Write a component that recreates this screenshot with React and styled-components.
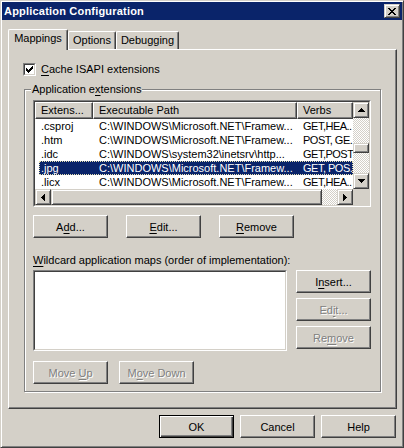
import React from 'react';
import styled, { createGlobalStyle, css } from 'styled-components';

const FACE = '#d4d0c8';
const DARK = '#404040';
const SHADOW = '#808080';
const NAVY = '#0a246a';

const Global = createGlobalStyle`
  html, body { margin: 0; padding: 0; background: ${FACE}; }
  body {
    font-family: "Liberation Sans", Arial, sans-serif;
    font-size: 11px;
    color: #000;
  }
  * { box-sizing: border-box; }
  u { text-decoration-thickness: 1px; text-underline-offset: 2px; }
`;

const Window = styled.div`
  width: 404px;
  height: 448px;
  background: ${FACE};
  border: 1px solid;
  border-color: ${FACE} ${DARK} ${DARK} ${FACE};
  box-shadow: inset 1px 1px #fff, inset -1px -1px ${SHADOW};
  padding: 1px;
  display: flex;
  flex-direction: column;
`;

const TitleBar = styled.div`
  height: 18px;
  background: ${NAVY};
  color: #fff;
  font-weight: bold;
  display: flex;
  align-items: center;
  justify-content: space-between;
  padding: 0 2px 0 2px;
`;

const TitleText = styled.span`
  line-height: 13px;
  letter-spacing: 0.2px;
`;

const raised = css`
  border: 1px solid;
  border-color: ${FACE} ${DARK} ${DARK} ${FACE};
  box-shadow: inset 1px 1px #fff, inset -1px -1px ${SHADOW};
  background: ${FACE};
`;

const CloseButton = styled.div`
  ${raised};
  width: 16px;
  height: 14px;
  display: flex;
  align-items: center;
  justify-content: center;
`;

const Body = styled.div`
  flex: 1;
  display: flex;
  flex-direction: column;
  padding: 9px 5px 0 6px;
`;

const TabStrip = styled.div`
  height: 20px;
  display: flex;
  align-items: flex-end;
`;

const Tab = styled.div`
  position: relative;
  width: ${p => p.$w}px;
  height: ${p => (p.$active ? 21 : 18)}px;
  margin-bottom: ${p => (p.$active ? -1 : 0)}px;
  z-index: ${p => (p.$active ? 2 : 0)};
  background: ${FACE};
  border-top: 1px solid #fff;
  border-left: 1px solid #fff;
  border-right: 1px solid ${DARK};
  border-radius: 2px 2px 0 0;
  box-shadow: inset -1px 0 ${SHADOW};
  text-align: center;
  line-height: 13px;
  padding-top: 2px;
`;

const TabPage = styled.div`
  width: 389px;
  height: 360px;
  border: 1px solid;
  border-color: #fff ${DARK} ${DARK} #fff;
  box-shadow: inset -1px -1px ${SHADOW};
  display: flex;
  flex-direction: column;
  padding: 13px 0 0 14px;
`;

const CheckRow = styled.label`
  display: flex;
  align-items: center;
  gap: 5px;
  height: 13px;
  line-height: 13px;
`;

const CheckOuter = styled.span`
  width: 13px;
  height: 13px;
  border: 1px solid;
  border-color: ${SHADOW} #fff #fff ${SHADOW};
  display: flex;
`;

const CheckInner = styled.span`
  flex: 1;
  border: 1px solid;
  border-color: ${DARK} ${FACE} ${FACE} ${DARK};
  background: #fff;
  padding: 1px;
  display: flex;
`;

const GroupBox = styled.div`
  position: relative;
  margin: 13px 0 0 1px;
  width: 357px;
  height: 303px;
  border: 1px solid ${SHADOW};
  box-shadow: 1px 1px 0 #fff, inset 1px 1px 0 #fff;
  padding: 10px 0 0 8px;
  display: flex;
  flex-direction: column;
`;

const Legend = styled.span`
  position: absolute;
  top: -7px;
  left: 6px;
  padding: 0 1px;
  background: ${FACE};
  line-height: 13px;
`;

const SunkenOuter = styled.div`
  width: ${p => p.$w}px;
  height: ${p => p.$h}px;
  border: 1px solid;
  border-color: ${SHADOW} #fff #fff ${SHADOW};
  display: flex;
`;

const SunkenInner = styled.div`
  flex: 1;
  border: 1px solid;
  border-color: ${DARK} ${FACE} ${FACE} ${DARK};
  background: #fff;
  min-width: 0;
`;

const ListGrid = styled(SunkenInner)`
  display: grid;
  grid-template-columns: 318px 16px;
  grid-template-rows: 87px 16px;
  overflow: hidden;
`;

const Columns = css`
  display: grid;
  grid-template-columns: 58px 204px 56px;
`;

const ItemsArea = styled.div`
  display: flex;
  flex-direction: column;
  overflow: hidden;
`;

const HeaderRow = styled.div`
  ${Columns};
  height: 17px;
`;

const HeaderCell = styled.div`
  ${raised};
  border-color: #fff ${DARK} ${DARK} #fff;
  box-shadow: inset -1px -1px ${SHADOW};
  padding-left: 5px;
  line-height: 15px;
  white-space: nowrap;
  overflow: hidden;
`;

const Row = styled.div`
  ${Columns};
  position: relative;
  height: 14px;
  line-height: 14px;
  color: ${p => (p.$selected ? '#fff' : '#000')};
  background: ${p => (p.$selected ? `linear-gradient(to right, transparent 4px, ${NAVY} 4px)` : 'transparent')};
  ${p => p.$selected && css`
    &::after {
      content: '';
      position: absolute;
      top: 0; bottom: 0; left: 4px; right: 0;
      border: 1px dotted #e6dfb0;
    }
  `}
`;

const Cell = styled.div`
  padding-left: 6px;
  white-space: nowrap;
  overflow: hidden;
  letter-spacing: ${p => (p.$tight ? '-0.5px' : 'normal')};
`;

const checker = css`
  background-color: #fff;
  background-image: conic-gradient(${FACE} 25%, #fff 0 50%, ${FACE} 0 75%, #fff 0);
  background-size: 2px 2px;
`;

const VScroll = styled.div`
  display: flex;
  flex-direction: column;
`;

const HScroll = styled.div`
  display: flex;
`;

const ScrollButton = styled.div`
  ${raised};
  width: 16px;
  height: 16px;
  flex: none;
  display: flex;
  align-items: center;
  justify-content: center;
`;

const Track = styled.div`
  ${checker};
  flex: 1;
  display: flex;
  flex-direction: ${p => (p.$vertical ? 'column' : 'row')};
  padding-top: ${p => p.$offset || 0}px;
`;

const Thumb = styled.div`
  ${raised};
  flex: none;
  width: ${p => p.$w}px;
  height: ${p => p.$h}px;
`;

const Corner = styled.div`
  background: ${FACE};
`;

const ButtonRow = styled.div`
  display: flex;
  gap: ${p => p.$gap}px;
  margin-top: ${p => p.$top || 0}px;
`;

const ButtonFrame = styled.div`
  width: 75px;
  height: 23px;
  flex: none;
  background: ${FACE};
  display: flex;
  align-items: center;
  justify-content: center;
  line-height: 13px;
  border: 1px solid;
  border-color: ${p => (p.$default ? '#000' : `#fff ${DARK} ${DARK} #fff`)};
  box-shadow: ${p =>
    p.$default
      ? `inset 1px 1px #fff, inset -1px -1px ${DARK}, inset -2px -2px ${SHADOW}`
      : `inset -1px -1px ${SHADOW}`};
  color: ${p => (p.$disabled ? SHADOW : '#000')};
  text-shadow: ${p => (p.$disabled ? '1px 1px 0 #fff' : 'none')};
  padding-top: 1px;
`;

const ButtonLabel = styled.span`
  white-space: pre;
`;

const Button = ({ children, ...rest }) => (
  <ButtonFrame {...rest}>
    <ButtonLabel>{children}</ButtonLabel>
  </ButtonFrame>
);

const FieldLabel = styled.div`
  margin-top: 16px;
  height: 13px;
  line-height: 13px;
`;

const WildRow = styled.div`
  display: flex;
  gap: 9px;
  margin-top: 3px;
`;

const ButtonColumn = styled.div`
  display: flex;
  flex-direction: column;
  gap: 5px;
`;

const Footer = styled.div`
  display: flex;
  justify-content: flex-end;
  gap: 6px;
  margin-top: 6px;
  padding-right: 1px;
`;

const Pixels = ({ w, h, rects, color = '#000' }) => (
  <svg width={w} height={h} viewBox={`0 0 ${w} ${h}`} shapeRendering="crispEdges">
    {rects.map(([x, y, rw, rh], i) => (
      <rect key={i} x={x} y={y} width={rw} height={rh} fill={color} />
    ))}
  </svg>
);

const CheckMark = () => (
  <Pixels
    w={7}
    h={7}
    rects={[[0, 2, 1, 3], [1, 3, 1, 3], [2, 4, 1, 3], [3, 3, 1, 3], [4, 2, 1, 3], [5, 1, 1, 3], [6, 0, 1, 3]]}
  />
);

const CloseGlyph = () => (
  <Pixels
    w={8}
    h={7}
    rects={[
      [0, 0, 2, 1], [6, 0, 2, 1],
      [1, 1, 2, 1], [5, 1, 2, 1],
      [2, 2, 4, 1],
      [3, 3, 2, 1],
      [2, 4, 4, 1],
      [1, 5, 2, 1], [5, 5, 2, 1],
      [0, 6, 2, 1], [6, 6, 2, 1],
    ]}
  />
);

const Arrow = ({ dir }) => {
  if (dir === 'up')
    return <Pixels w={7} h={4} rects={[[3, 0, 1, 1], [2, 1, 3, 1], [1, 2, 5, 1], [0, 3, 7, 1]]} />;
  if (dir === 'down')
    return <Pixels w={7} h={4} rects={[[0, 0, 7, 1], [1, 1, 5, 1], [2, 2, 3, 1], [3, 3, 1, 1]]} />;
  if (dir === 'left')
    return <Pixels w={4} h={7} rects={[[0, 3, 1, 1], [1, 2, 1, 3], [2, 1, 1, 5], [3, 0, 1, 7]]} />;
  return <Pixels w={4} h={7} rects={[[0, 0, 1, 7], [1, 1, 1, 5], [2, 2, 1, 3], [3, 3, 1, 1]]} />;
};

const rows = [
  ['.csproj', 'C:\\WINDOWS\\Microsoft.NET\\Framew...', 'GET,HEA..'],
  ['.htm', 'C:\\WINDOWS\\Microsoft.NET\\Framew...', 'POST, GE.'],
  ['.idc', 'C:\\WINDOWS\\system32\\inetsrv\\http...', 'GET,POST'],
  ['.jpg', 'C:\\WINDOWS\\Microsoft.NET\\Framew...', 'GET, POS.', true],
  ['.licx', 'C:\\WINDOWS\\Microsoft.NET\\Framew...', 'GET,HEA..'],
];

export default function App() {
  return (
    <>
      <Global />
      <Window>
        <TitleBar>
          <TitleText>Application Configuration</TitleText>
          <CloseButton>
            <CloseGlyph />
          </CloseButton>
        </TitleBar>
        <Body>
          <TabStrip>
            <Tab $w={60} $active>Mappings</Tab>
            <Tab $w={48}>Options</Tab>
            <Tab $w={63}>Debugging</Tab>
          </TabStrip>
          <TabPage>
            <CheckRow>
              <CheckOuter>
                <CheckInner>
                  <CheckMark />
                </CheckInner>
              </CheckOuter>
              <span><u>C</u>ache ISAPI extensions</span>
            </CheckRow>
            <GroupBox>
              <Legend>Application e<u>x</u>tensions</Legend>
              <SunkenOuter $w={338} $h={107}>
                <ListGrid>
                  <ItemsArea>
                    <HeaderRow>
                      <HeaderCell>Extens...</HeaderCell>
                      <HeaderCell>Executable Path</HeaderCell>
                      <HeaderCell>Verbs</HeaderCell>
                    </HeaderRow>
                    {rows.map(([ext, path, verbs, sel]) => (
                      <Row key={ext} $selected={sel}>
                        <Cell>{ext}</Cell>
                        <Cell>{path}</Cell>
                        <Cell $tight>{verbs}</Cell>
                      </Row>
                    ))}
                  </ItemsArea>
                  <VScroll>
                    <ScrollButton><Arrow dir="up" /></ScrollButton>
                    <Track $vertical $offset={25}>
                      <Thumb $w={16} $h={10} />
                    </Track>
                    <ScrollButton><Arrow dir="down" /></ScrollButton>
                  </VScroll>
                  <HScroll>
                    <ScrollButton><Arrow dir="left" /></ScrollButton>
                    <Thumb $w={271} $h={16} />
                    <Track />
                    <ScrollButton><Arrow dir="right" /></ScrollButton>
                  </HScroll>
                  <Corner />
                </ListGrid>
              </SunkenOuter>
              <ButtonRow $gap={18} $top={8}>
                <Button>A<u>d</u>d...</Button>
                <Button><u>E</u>dit...</Button>
                <Button><u>R</u>emove</Button>
              </ButtonRow>
              <FieldLabel><u>W</u>ildcard application maps (order of implementation):</FieldLabel>
              <WildRow>
                <SunkenOuter $w={254} $h={81}>
                  <SunkenInner />
                </SunkenOuter>
                <ButtonColumn>
                  <Button>I<u>n</u>sert...</Button>
                  <Button $disabled>Ed<u>i</u>t...</Button>
                  <Button $disabled>Re<u>m</u>ove</Button>
                </ButtonColumn>
              </WildRow>
              <ButtonRow $gap={11} $top={10}>
                <Button $disabled>Move <u>U</u>p</Button>
                <Button $disabled>M<u>o</u>ve Down</Button>
              </ButtonRow>
            </GroupBox>
          </TabPage>
          <Footer>
            <Button $default>OK</Button>
            <Button>Cancel</Button>
            <Button>Help</Button>
          </Footer>
        </Body>
      </Window>
    </>
  );
}
